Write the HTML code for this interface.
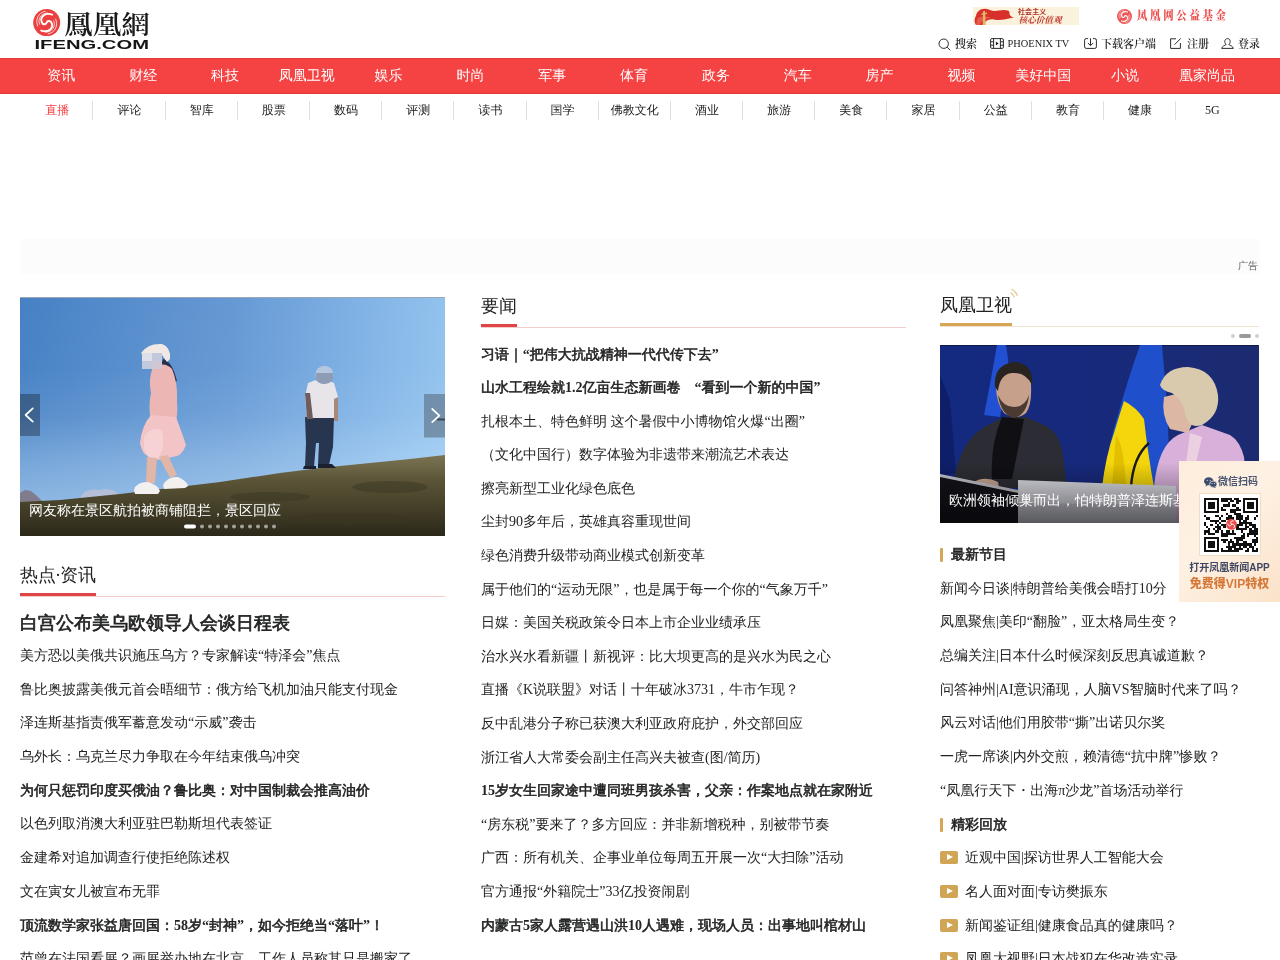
<!DOCTYPE html>
<html lang="zh-CN">
<head>
<meta charset="utf-8">
<title>凤凰网</title>
<style>
*{box-sizing:border-box}
html,body{margin:0;padding:0;background:#fff}
html{overflow:hidden;height:960px}
body{will-change:transform;width:1280px;height:960px;overflow:hidden;position:relative;font-family:"Liberation Serif","WenQuanYi Zen Hei",serif;color:#212223;font-size:14px}
a{color:inherit;text-decoration:none}
ul{list-style:none;margin:0;padding:0}
.b{-webkit-text-stroke:0.55px currentColor}
.b b{font-weight:bold;-webkit-text-stroke:0}
.h1.b{-webkit-text-stroke:0.69px currentColor}
#hd{position:absolute;left:0;top:0;width:1280px;height:58px}
#logo{position:absolute;left:30px;top:6px}
#toplinks{position:absolute;right:20px;top:34px;height:18px;font-family:"Liberation Serif","Noto Serif CJK SC",serif;font-weight:600;font-size:12px;color:#212223;display:flex;align-items:center}
#toplinks span.i{display:inline-flex;align-items:center;margin-left:14px}
#toplinks svg{margin-right:4px}
#nav{position:absolute;left:0;top:58px;width:1280px;height:36px;background:#f54343;box-shadow:inset 0 1px rgba(120,0,0,.12),inset 0 -1px rgba(120,0,0,.14)}
#nav ul{position:absolute;left:20.4px;top:0;display:flex}
#nav li{width:81.83px;text-align:center;color:#fff;font-size:14px;line-height:36px}
#sub{position:absolute;left:20.2px;top:94px;height:32px;display:flex}
#sub li{width:72.2px;padding-left:2px;text-align:center;font-size:12px;line-height:32px;position:relative;color:#212223}
#sub li:after{content:"";position:absolute;right:-1px;top:7px;width:1px;height:19px;background:#e0e0e0}
#sub li:last-child:after{display:none}
#sub li.on{color:#f54343}
#ad{position:absolute;left:20px;top:239px;width:1240px;height:35px;background:#fcfcfc}
#ad span{position:absolute;right:2px;top:21px;font-size:10px;color:#666;line-height:12px}
.col{position:absolute}
.tit{font-size:18px;line-height:24px;height:34px;border-bottom:1px solid #f3cccc;position:relative;color:#212223}
.tit i{position:absolute;left:0;bottom:0;height:3px;background:#e04545;display:block}
.list li{font-size:14px;line-height:20px;height:33.7px;white-space:nowrap;color:#212223}
.h1{font-size:18px;line-height:24px;margin-top:14px;height:36px;white-space:nowrap;color:#212223}
.tit.gold{border-bottom-color:#eee3cc}
.tit.gold i{background:#d4a656}
#dots{height:18px;position:relative}
#dots b{position:absolute;top:7px;width:4px;height:4px;border-radius:2px;background:#d0d0d0}
#dots b:nth-child(1){right:24px}
#dots b.on{right:8px;width:12px;background:#999}
#dots b:nth-child(3){right:0}
.sec{font-size:14px;line-height:20px;height:33.7px;padding-left:11px;position:relative;margin-top:0}
.sec:before{content:"";position:absolute;left:0;top:3px;width:3px;height:14px;background:#d4a656;border-radius:1px}
.play li{padding-left:25px;position:relative}
.play li:before{content:"";position:absolute;left:0;top:4px;width:17px;height:12px;background:#d4a656;border-radius:2px}
.play li:after{content:"";position:absolute;left:6px;top:7px;border-left:6px solid #fff;border-top:3px solid transparent;border-bottom:3px solid transparent}
#toplinks{right:auto;left:0;top:0;width:1280px;height:58px;display:block;font-size:11px}
#toplinks span.i{position:absolute;top:36px;height:16px;margin:0;line-height:16px;white-space:nowrap}
#toplinks span.i svg{position:absolute;left:0;top:2px;margin:0}
#toplinks em{font-style:normal;font-weight:normal;font-size:10.4px}
#toplinks span.i:nth-child(1){left:938px;padding-left:17px}
#toplinks span.i:nth-child(2){left:990px;padding-left:17.5px}
#toplinks span.i:nth-child(3){left:1084px;padding-left:17px}
#toplinks span.i:nth-child(4){left:1170px;padding-left:17px}
#toplinks span.i:nth-child(5){left:1221px;padding-left:17px}
#ban1{position:absolute;left:973px;top:7px;width:106px;height:18px;background:#faf2dc;overflow:hidden;color:#c8281f;font-family:"Liberation Sans","Noto Sans CJK SC",sans-serif}
#ban1 .t1{position:absolute;left:45px;top:1.2px;font-size:7px;line-height:8px;font-weight:bold;letter-spacing:0.1px;color:#b8352c}
#ban1 .t2{position:absolute;left:45.5px;top:8.6px;font-size:8.6px;line-height:9px;font-weight:bold;font-style:italic;color:#c03a30;font-family:"Liberation Serif","Noto Serif CJK SC",serif}
#ban2{position:absolute;left:1117px;top:7px;width:112px;height:18px;color:#ec5252}
#ban2 span{position:absolute;left:20px;top:2.2px;font-family:"Liberation Serif","Noto Serif CJK SC",serif;font-weight:900;font-size:12.4px;line-height:15px;display:inline-block;transform:scaleX(0.84);transform-origin:0 0;letter-spacing:3.2px;white-space:nowrap}
.cap{position:absolute;color:#fff;font-size:14px;line-height:20px;white-space:nowrap}
.play li:before{top:3px;width:18px;height:13px;background:#d0a555;border-radius:2px}
.play li:after{left:7px;top:6px;border-left:6px solid #fff;border-top:3.5px solid transparent;border-bottom:3.5px solid transparent}
.h1{height:35px}
#c2 .list li{height:33.6px}
#qr{position:absolute;left:1179px;top:461px;width:101px;height:141px;background:linear-gradient(135deg,#fdeddc 0%,#fef1e3 45%,#fbe2c9 100%);font-family:"Liberation Sans","Noto Sans CJK SC",sans-serif;white-space:nowrap}
#qr .q1{position:absolute;left:39px;top:14px;font-size:10px;line-height:14px;font-weight:bold;color:#4a5672}
#qr .qbox{position:absolute;left:20px;top:31.5px;width:62px;height:63px;background:#fff;border:1px solid #f1dcc6}
#qr .q2{position:absolute;left:0;width:101px;text-align:center;top:100px;font-size:10px;line-height:14px;font-weight:bold;color:#3e4762}
#qr .q3{position:absolute;left:0;width:101px;text-align:center;top:115px;font-size:12px;line-height:16px;font-weight:900;color:#d67a3c}
</style>
</head>
<body>
<div id="hd">
<div id="logo"><svg width="130" height="52" viewBox="0 0 130 52" style="display:block;overflow:visible">
<g transform="translate(3.2,3.1)"><circle cx="13.5" cy="13.5" r="13.5" fill="#ec4040"/><g fill="none" stroke="#fff" stroke-linecap="round"><path d="M19 5.5C12 3 6.5 8 8.5 13C9.5 16 13 15.5 13.5 13.5C14 11.5 17.5 11 18.5 14C20.5 19 15 24 8 21.5" stroke-width="1.9"/><path d="M12 2.2C4.5 3.5 2 11 4.5 17M14.5 3.9C7.5 4 4.3 10 6.4 15.2M15 24.8C22.5 23.5 25 16 22.5 10M12.5 23.1C19.5 23 22.7 17 20.6 11.8" stroke-width=".9" stroke-opacity=".85"/></g></g>
<text x="34" y="28.2" font-family="'Liberation Serif','Noto Serif CJK TC','Noto Serif CJK SC',serif" font-weight="600" font-size="26.3" fill="#1a1a1a" textLength="86" lengthAdjust="spacingAndGlyphs">鳳凰網</text>
<text x="4.5" y="43.1" font-family="'Liberation Sans',sans-serif" font-weight="bold" font-size="13" fill="#151515" textLength="114.5" lengthAdjust="spacingAndGlyphs">IFENG.COM</text>
</svg></div>
<div id="ban1"><svg width="44" height="18" viewBox="0 0 44 18" style="position:absolute;left:0;top:0"><path d="M3 9C4 3 10 0 17 3C23 6 29 1 36 4C37 8 36 9 41 10.5C33 12 27 14 21 12.5C15 11.5 12 15 10 18L3 18C1 15 1.5 11 3 9Z" fill="#d8302a"/><path d="M4 12C8 8 14 9 18 11C12 11 8 14 7 18L3 18Z" fill="#e85a4a"/><path d="M10.2 4L12 4L12.8 18L9.6 18Z" fill="#e0b868"/><path d="M8.5 6.5L14 5.5L14 7L8.5 8Z" fill="#e0b868"/></svg><span class="t1">社会主义</span><span class="t2">核心价值观</span></div>
<div id="ban2"><svg width="15" height="15" viewBox="0 0 27 27" style="position:absolute;left:0;top:1.5px"><circle cx="13.5" cy="13.5" r="13.5" fill="#ee5555"/><g fill="none" stroke="#fff" stroke-linecap="round"><path d="M19 5.5C12 3 6.5 8 8.5 13C9.5 16 13 15.5 13.5 13.5C14 11.5 17.5 11 18.5 14C20.5 19 15 24 8 21.5" stroke-width="1.9"/><path d="M12 2.2C4.5 3.5 2 11 4.5 17M14.5 3.9C7.5 4 4.3 10 6.4 15.2M15 24.8C22.5 23.5 25 16 22.5 10M12.5 23.1C19.5 23 22.7 17 20.6 11.8" stroke-width=".9" stroke-opacity=".85"/></g></svg><span>凤凰网公益基金</span></div>
<div id="toplinks">
<span class="i"><svg width="13" height="13" viewBox="0 0 13 13" fill="none" stroke="#2b2b2b" stroke-width="1"><circle cx="5.7" cy="5.7" r="4.7"/><path d="M9.2 9.2L12.3 12.3"/></svg>搜索</span>
<span class="i"><svg width="14" height="11" viewBox="0 0 14 11" fill="none" stroke="#2b2b2b" stroke-width="1"><rect x=".6" y=".6" width="12.8" height="9.8" rx="1.3"/><path d="M3.6 .6V10.4M10.4 .6V10.4M.6 3.8H3.6M.6 7.2H3.6M10.4 3.8H13.4M10.4 7.2H13.4"/><path d="M5.9 3.6L8.6 5.5L5.9 7.4Z" fill="#212223" stroke="none"/></svg><em>PHOENIX TV</em></span>
<span class="i"><svg width="13" height="11" viewBox="0 0 13 11" fill="none" stroke="#2b2b2b" stroke-width="1"><path d="M4 .6H2.2Q.6 .6 .6 2.2V8.8Q.6 10.4 2.2 10.4H10.8Q12.4 10.4 12.4 8.8V2.2Q12.4 .6 10.8 .6H9"/><path d="M6.5 .3V7.4M3.9 5L6.5 7.6L9.1 5"/></svg>下载客户端</span>
<span class="i"><svg width="12" height="11" viewBox="0 0 12 11" fill="none" stroke="#2b2b2b" stroke-width="1"><path d="M6 .8H.6V10.4H10.4V5"/><path d="M4.6 6.6L10.8 .4"/></svg>注册</span>
<span class="i"><svg width="13" height="11" viewBox="0 0 13 11" fill="none" stroke="#2b2b2b" stroke-width="1"><path d="M6.5 .6C8.2 .6 9.2 1.9 9.2 3.5C9.2 5 8.4 6 7.8 6.5C9.5 7.5 11.8 8.2 12.3 10.4H.7C1.2 8.2 3.5 7.5 5.2 6.5C4.6 6 3.8 5 3.8 3.5C3.8 1.9 4.8 .6 6.5 .6Z"/></svg>登录</span>
</div>
</div>
<div id="nav"><ul>
<li>资讯</li><li>财经</li><li>科技</li><li>凤凰卫视</li><li>娱乐</li><li>时尚</li><li>军事</li><li>体育</li><li>政务</li><li>汽车</li><li>房产</li><li>视频</li><li>美好中国</li><li>小说</li><li>凰家尚品</li>
</ul></div>
<ul id="sub">
<li class="on">直播</li><li>评论</li><li>智库</li><li>股票</li><li>数码</li><li>评测</li><li>读书</li><li>国学</li><li>佛教文化</li><li>酒业</li><li>旅游</li><li>美食</li><li>家居</li><li>公益</li><li>教育</li><li>健康</li><li>5G</li>
</ul>
<div id="ad"><span>广告</span></div>

<!-- LEFT -->
<div class="col" id="c1" style="left:20px;top:297px;width:425px">
<div id="slide" style="position:relative;width:425px;height:239px;overflow:hidden;background:#4f8fd8"><svg width="425" height="239" viewBox="0 0 425 239" style="position:absolute;left:0;top:0">
<defs>
<linearGradient id="sky" x1="0" y1="0" x2="1" y2="0"><stop offset="0" stop-color="#4781c4"/><stop offset=".5" stop-color="#6699d4"/><stop offset=".8" stop-color="#80b2e5"/><stop offset="1" stop-color="#92c2ed"/></linearGradient>
<linearGradient id="skyv" x1="0" y1="0" x2="0" y2="1"><stop offset="0" stop-color="#cfeaff" stop-opacity="0"/><stop offset=".3" stop-color="#cfeaff" stop-opacity=".02"/><stop offset=".5" stop-color="#cfeaff" stop-opacity=".12"/><stop offset=".68" stop-color="#cfeaff" stop-opacity=".34"/><stop offset=".85" stop-color="#cfeaff" stop-opacity=".5"/><stop offset="1" stop-color="#cfeaff" stop-opacity=".55"/></linearGradient>
<linearGradient id="hill" x1="0" y1="0" x2="0" y2="1"><stop offset="0" stop-color="#7c7554"/><stop offset=".3" stop-color="#5c5538"/><stop offset=".65" stop-color="#443f28"/><stop offset="1" stop-color="#2b281a"/></linearGradient>
</defs>
<rect width="425" height="239" fill="url(#sky)"/>
<rect width="425" height="239" fill="url(#skyv)"/>
<rect width="425" height="1" fill="#9aa6b4"/>
<path d="M0 196 L5 193 L11 194 L17 199 L24 206 L0 207Z" fill="#807c8e"/>
<path d="M61 199 Q66 191 78 193 Q90 191 97 195 L99 204 L60 206Z" fill="#b5bfd8"/>
<path d="M0 205 L40 203 L100 197 L150 191 L200 185 L260 176 L300 171 L350 166 L390 162 L425 158 L425 239 L0 239Z" fill="url(#hill)"/>
<g fill="#3a3522" fill-opacity=".5"><ellipse cx="250" cy="200" rx="40" ry="5"/><ellipse cx="370" cy="190" rx="38" ry="6"/><ellipse cx="120" cy="218" rx="50" ry="5"/><ellipse cx="330" cy="222" rx="60" ry="6"/></g>
<!-- woman -->
<path d="M143 62 Q152 64 157 84 L150 86 Q148 72 141 68Z" fill="#29304e"/>
<path d="M133 70 Q145 64 152 72 Q158 86 157 104 Q158 116 156 124 L131 124 Q128 110 131 96 Q128 82 133 70Z" fill="#ecb6b4"/>
<path d="M131 118 Q122 128 120 146 Q122 158 130 160 Q140 166 152 160 Q162 160 166 148 Q162 136 156 120Z" fill="#f2c4c6"/>
<path d="M124 140 Q132 128 142 134 Q146 150 138 162 Q128 164 124 152Z" fill="#f6d2d4"/>
<path d="M127 160 L126 186 L135 186 L137 161Z" fill="#e2b6a6"/>
<path d="M139 160 L150 181 L157 178 L148 158Z" fill="#e2b6a6"/>
<path d="M114 193 Q116 185 128 185 Q138 188 140 194 L138 197 L115 197Z" fill="#f3f1ef"/>
<path d="M143 188 Q148 179 158 180 Q167 184 168 189 L165 191 L144 192Z" fill="#f3f1ef"/>
<path d="M121 56 Q128 46 142 47 Q151 50 150 62 L147 65 L142 58 L123 58Z" fill="#efe8e4"/>
<rect x="122" y="56" width="20" height="16" fill="#c2c9dc"/>
<rect x="122" y="56" width="10" height="8" fill="#dde0ea"/>
<rect x="132" y="64" width="10" height="8" fill="#cfc8d2"/>
<!-- man -->
<path d="M285 120 L314 120 L313 150 L309 168 L298 168 L299 146 L296 146 L294 170 L285 170 L286 146Z" fill="#27354f"/>
<path d="M284 169 L296 169 L296 172 L283 172Z M298 167 L312 167 L316 171 L298 171Z" fill="#1a2030"/>
<path d="M288 86 Q301 79 314 86 L318 100 L316 121 L287 121 L285 100Z" fill="#e8e5ea"/>
<path d="M285 96 L290 96 L293 122 L287 122Z" fill="#6e5d5c"/><path d="M314 102 L318 100 L318 124 L314 124Z" fill="#a88878"/>
<circle cx="304.4" cy="77.7" r="9" fill="#b4c6e0"/>
<path d="M296 76 H313 V83 Q309 87 304 87 Q299 87 296 83Z" fill="#8e9cb6"/>
<rect x="417" y="121.5" width="8" height="2" fill="#2a3444"/>
<!-- arrows -->
<rect x="0" y="97" width="20" height="42" fill="#000" fill-opacity=".3"/>
<path d="M12.8 111.4L5.6 118L12.8 124.6" fill="none" stroke="#fff" stroke-width="1.7" stroke-linecap="round" stroke-linejoin="round"/>
<rect x="404" y="97" width="21" height="43.5" fill="#4d5b6a" fill-opacity=".5"/>
<path d="M412.2 112L419.4 118.6L412.2 125.2" fill="none" stroke="#fff" stroke-width="1.7" stroke-linecap="round" stroke-linejoin="round"/>
<!-- dots -->
<rect x="164" y="227.5" width="12" height="4" rx="2" fill="#fff"/>
<g fill="#fff" fill-opacity=".55"><circle cx="182" cy="229.5" r="2"/><circle cx="190" cy="229.5" r="2"/><circle cx="198" cy="229.5" r="2"/><circle cx="206" cy="229.5" r="2"/><circle cx="214" cy="229.5" r="2"/><circle cx="222" cy="229.5" r="2"/><circle cx="230" cy="229.5" r="2"/><circle cx="238" cy="229.5" r="2"/><circle cx="246" cy="229.5" r="2"/><circle cx="254" cy="229.5" r="2"/></g>
</svg>
<div class="cap" style="left:9px;top:204px">网友称在景区航拍被商铺阻拦，景区回应</div></div>
<div class="tit" style="margin-top:27px"><span>热点<span style="margin:0 -1px">·</span>资讯</span><i style="width:76px"></i></div>
<div class="h1 b">白宫公布美乌欧领导人会谈日程表</div>
<ul class="list">
<li>美方恐以美俄共识施压乌方？专家解读“特泽会”焦点</li>
<li>鲁比奥披露美俄元首会晤细节：俄方给飞机加油只能支付现金</li>
<li>泽连斯基指责俄军蓄意发动“示威”袭击</li>
<li>乌外长：乌克兰尽力争取在今年结束俄乌冲突</li>
<li class="b">为何只惩罚印度买俄油？鲁比奥：对中国制裁会推高油价</li>
<li>以色列取消澳大利亚驻巴勒斯坦代表签证</li>
<li>金建希对追加调查行使拒绝陈述权</li>
<li>文在寅女儿被宣布无罪</li>
<li class="b">顶流数学家张益唐回国：<b>58</b>岁<b>“</b>封神<b>”</b>，如今拒绝当<b>“</b>落叶<b>”</b>！</li>
<li>范曾在法国看展？画展举办地在北京，工作人员称其只是搬家了</li>
</ul>
</div>

<!-- MID -->
<div class="col" id="c2" style="left:481px;top:294px;width:425px">
<div class="tit"><span>要闻</span><i style="width:36px"></i></div>
<ul class="list" style="margin-top:16.5px">
<li class="b">习语｜<b>“</b>把伟大抗战精神一代代传下去<b>”</b></li>
<li class="b">山水工程绘就<b>1.2</b>亿亩生态新画卷　<b>“</b>看到一个新的中国<b>”</b></li>
<li>扎根本土、特色鲜明 这个暑假中小博物馆火爆“出圈”</li>
<li>（文化中国行）数字体验为非遗带来潮流艺术表达</li>
<li>擦亮新型工业化绿色底色</li>
<li>尘封90多年后，英雄真容重现世间</li>
<li>绿色消费升级带动商业模式创新变革</li>
<li>属于他们的“运动无限”，也是属于每一个你的“气象万千”</li>
<li>日媒：美国关税政策令日本上市企业业绩承压</li>
<li>治水兴水看新疆丨新视评：比大坝更高的是兴水为民之心</li>
<li>直播《K说联盟》对话丨十年破冰3731，牛市乍现？</li>
<li>反中乱港分子称已获澳大利亚政府庇护，外交部回应</li>
<li>浙江省人大常委会副主任高兴夫被查(图/简历)</li>
<li class="b"><b>15</b>岁女生回家途中遭同班男孩杀害，父亲：作案地点就在家附近</li>
<li>“房东税”要来了？多方回应：并非新增税种，别被带节奏</li>
<li>广西：所有机关、企事业单位每周五开展一次“大扫除”活动</li>
<li>官方通报“外籍院士”33亿投资闹剧</li>
<li class="b">内蒙古<b>5</b>家人露营遇山洪<b>10</b>人遇难，现场人员：出事地叫棺材山</li>
</ul>
</div>

<!-- RIGHT -->
<div class="col" id="c3" style="left:940px;top:293px;width:319px">
<div class="tit gold"><span>凤凰卫视</span><svg width="90" height="20" viewBox="0 -10 90 20" style="position:absolute;left:0;top:-10px;overflow:visible"><path d="M70.9 -0.2A8 8 0 0 1 74.1 4.0M71.9 -3.7A11.5 11.5 0 0 1 77.3 2.6" fill="none" stroke="#e3c896" stroke-width="1.2" stroke-linecap="round"/></svg><i style="width:72px"></i></div>
<div id="dots"><b></b><b class="on"></b><b></b></div>
<div id="tv" style="position:relative;width:319px;height:178px;overflow:hidden;background:#1b2e7a"><svg width="319" height="178" viewBox="0 0 319 178" style="position:absolute;left:0;top:0">
<defs>
<linearGradient id="tvbg" x1="0" y1="0" x2="1" y2="0"><stop offset="0" stop-color="#132a80"/><stop offset=".45" stop-color="#17297c"/><stop offset="1" stop-color="#1c2b70"/></linearGradient>
<linearGradient id="tvsh" x1="0" y1="0" x2="0" y2="1"><stop offset="0" stop-color="#000" stop-opacity="0"/><stop offset="1" stop-color="#000" stop-opacity=".55"/></linearGradient>
</defs>
<rect width="319" height="178" fill="url(#tvbg)"/>
<rect width="319" height="1" fill="#101a48"/>
<path d="M0 30 L10 55 L16 128 L0 132Z" fill="#0f1e68"/>
<path d="M57 0 L66 0 Q70 22 68 42 Q62 60 60 72 L44 70 Q50 40 57 0Z" fill="#2150d2"/>
<path d="M200 0 L222 0 Q226 40 228 80 L230 142 L163 142 Q168 100 178 70 Q186 40 200 0Z" fill="#1f4fcb"/>
<path d="M184 56 Q196 62 204 74 Q208 110 214 142 L162 142 Q166 110 174 88 Q180 68 184 56Z" fill="#f4d60c"/>
<path d="M176 90 Q184 100 186 142 L172 142Z" fill="#e2c000"/>
<path d="M191 142 Q193 112 209 98" fill="none" stroke="#1a1a22" stroke-width="2.4"/>
<!-- man -->
<path d="M14 134 Q22 92 48 80 L64 72 L86 72 L108 82 Q120 90 123 110 L127 142 L18 144Z" fill="#2c2c34"/>
<path d="M62 72 L84 74 L72 134 L52 134 Q50 100 62 72Z" fill="#0f0f14"/>
<path d="M56 40 Q56 22 74 19 Q92 20 91 40 Q92 60 86 68 Q76 76 64 68 Q56 58 56 40Z" fill="#c6a08b"/>
<path d="M55 42 Q53 20 74 17 Q94 18 92 40 Q86 27 72 28 Q60 29 58 46Z" fill="#2a2420"/>
<path d="M58 50 Q61 70 74 73 Q87 70 89 50 Q85 62 74 62 Q63 62 58 50Z" fill="#4a3a32"/>
<path d="M32 138 Q44 130 58 137 L60 148 L32 148Z" fill="#c9a691"/>
<!-- woman -->
<path d="M214 142 Q218 100 238 90 L262 80 L290 90 Q300 96 304 112 L310 178 L212 178Z" fill="#d8b0da"/>
<path d="M250 88 L262 92 L256 118 L246 118Z" fill="#ead0e0"/>
<path d="M224 52 Q221 70 230 84 L248 88 L256 70 L240 48Z" fill="#dcb8a4"/>
<path d="M220 40 Q226 22 248 22 Q274 24 278 50 Q280 70 262 80 Q250 84 246 72 Q244 56 232 48 Q222 46 220 40Z" fill="#d9caad"/>
<!-- podium -->
<path d="M0 131 L78 147 L78 178 L0 178Z" fill="#13131a"/>
<path d="M0 129 L78 145 L78 148 L0 132Z" fill="#c4c4ce"/>
<path d="M78 135 L236 141 L236 178 L78 178Z" fill="#dcdde5"/>
<path d="M78 158 L236 160 L236 178 L78 178Z" fill="#c4c5cf"/>
<rect y="118" width="319" height="60" fill="url(#tvsh)"/>
</svg>
<div class="cap" style="left:9px;top:146px">欧洲领袖倾巢而出，怕特朗普泽连斯基再吵架</div></div>
<div class="sec b" style="margin-top:22px">最新节目</div>
<ul class="list">
<li>新闻今日谈|特朗普给美俄会晤打10分</li>
<li>凤凰聚焦|美印“翻脸”，亚太格局生变？</li>
<li>总编关注|日本什么时候深刻反思真诚道歉？</li>
<li>问答神州|AI意识涌现，人脑VS智脑时代来了吗？</li>
<li>风云对话|他们用胶带“撕”出诺贝尔奖</li>
<li>一虎一席谈|内外交煎，赖清德“抗中牌”惨败？</li>
<li>“凤凰行天下・出海π沙龙”首场活动举行</li>
</ul>
<div class="sec b">精彩回放</div>
<ul class="list play">
<li>近观中国|探访世界人工智能大会</li>
<li>名人面对面|专访樊振东</li>
<li>新闻鉴证组|健康食品真的健康吗？</li>
<li>凤凰大视野|日本战犯在华改造实录</li>
</ul>
</div>
<div id="qr">
<svg width="13" height="11" viewBox="0 0 26 22" style="position:absolute;left:25px;top:16px"><ellipse cx="9.5" cy="8.5" rx="9.5" ry="8" fill="#3d4c6e"/><path d="M4 14L3 19L8 16Z" fill="#3d4c6e"/><ellipse cx="18.5" cy="14.5" rx="7.5" ry="6.3" fill="#3d4c6e" stroke="#fdebd9" stroke-width="1.4"/><path d="M22 19L23.5 22L19 20.5Z" fill="#3d4c6e"/><circle cx="6.5" cy="6.5" r="1.2" fill="#fdebd9"/><circle cx="12.5" cy="6.5" r="1.2" fill="#fdebd9"/><circle cx="16" cy="13" r="1" fill="#fdebd9"/><circle cx="21" cy="13" r="1" fill="#fdebd9"/></svg>
<span class="q1">微信扫码</span>
<div class="qbox"><svg width="54" height="54" viewBox="0 0 25 25" shape-rendering="crispEdges" style="position:absolute;left:4px;top:4px"><path d="M0 0h7v1h-7zM8 0h5v1h-5zM14 0h2v1h-2zM18 0h7v1h-7zM0 1h1v1h-1zM6 1h1v1h-1zM8 1h3v1h-3zM12 1h2v1h-2zM15 1h2v1h-2zM18 1h1v1h-1zM24 1h1v1h-1zM0 2h1v1h-1zM2 2h3v1h-3zM6 2h1v1h-1zM11 2h1v1h-1zM15 2h1v1h-1zM18 2h1v1h-1zM20 2h3v1h-3zM24 2h1v1h-1zM0 3h1v1h-1zM2 3h3v1h-3zM6 3h1v1h-1zM9 3h3v1h-3zM13 3h2v1h-2zM18 3h1v1h-1zM20 3h3v1h-3zM24 3h1v1h-1zM0 4h1v1h-1zM2 4h3v1h-3zM6 4h1v1h-1zM8 4h1v1h-1zM15 4h1v1h-1zM18 4h1v1h-1zM20 4h3v1h-3zM24 4h1v1h-1zM0 5h1v1h-1zM6 5h1v1h-1zM8 5h2v1h-2zM12 5h5v1h-5zM18 5h1v1h-1zM24 5h1v1h-1zM0 6h7v1h-7zM12 6h3v1h-3zM18 6h7v1h-7zM10 7h1v1h-1zM14 7h3v1h-3zM0 8h1v1h-1zM5 8h2v1h-2zM8 8h1v1h-1zM11 8h2v1h-2zM15 8h3v1h-3zM20 8h1v1h-1zM24 8h1v1h-1zM1 9h2v1h-2zM7 9h1v1h-1zM10 9h4v1h-4zM15 9h3v1h-3zM19 9h2v1h-2zM23 9h1v1h-1zM3 10h4v1h-4zM8 10h2v1h-2zM16 10h1v1h-1zM18 10h2v1h-2zM0 11h1v1h-1zM5 11h1v1h-1zM7 11h1v1h-1zM16 11h6v1h-6zM0 12h1v1h-1zM3 12h1v1h-1zM6 12h1v1h-1zM8 12h2v1h-2zM15 12h3v1h-3zM19 12h1v1h-1zM21 12h3v1h-3zM1 13h1v1h-1zM5 13h3v1h-3zM9 13h1v1h-1zM15 13h1v1h-1zM19 13h2v1h-2zM22 13h2v1h-2zM2 14h1v1h-1zM4 14h1v1h-1zM6 14h2v1h-2zM15 14h5v1h-5zM21 14h1v1h-1zM23 14h2v1h-2zM0 15h3v1h-3zM5 15h2v1h-2zM8 15h1v1h-1zM10 15h2v1h-2zM13 15h1v1h-1zM17 15h1v1h-1zM21 15h4v1h-4zM0 16h1v1h-1zM2 16h3v1h-3zM8 16h7v1h-7zM18 16h1v1h-1zM20 16h5v1h-5zM8 17h3v1h-3zM17 17h2v1h-2zM20 17h1v1h-1zM23 17h1v1h-1zM0 18h7v1h-7zM14 18h5v1h-5zM24 18h1v1h-1zM0 19h1v1h-1zM6 19h1v1h-1zM8 19h3v1h-3zM12 19h1v1h-1zM15 19h3v1h-3zM22 19h3v1h-3zM0 20h1v1h-1zM2 20h3v1h-3zM6 20h1v1h-1zM9 20h1v1h-1zM11 20h3v1h-3zM15 20h1v1h-1zM18 20h2v1h-2zM22 20h3v1h-3zM0 21h1v1h-1zM2 21h3v1h-3zM6 21h1v1h-1zM11 21h1v1h-1zM13 21h9v1h-9zM23 21h1v1h-1zM0 22h1v1h-1zM2 22h3v1h-3zM6 22h1v1h-1zM10 22h5v1h-5zM16 22h1v1h-1zM18 22h2v1h-2zM21 22h2v1h-2zM0 23h1v1h-1zM6 23h1v1h-1zM8 23h1v1h-1zM11 23h2v1h-2zM14 23h4v1h-4zM20 23h1v1h-1zM22 23h1v1h-1zM24 23h1v1h-1zM0 24h7v1h-7zM8 24h8v1h-8zM19 24h2v1h-2zM22 24h3v1h-3z" fill="#111"/></svg><svg width="11" height="11" viewBox="0 0 27 27" style="position:absolute;left:25.5px;top:25.5px"><circle cx="13.4" cy="13.2" r="13.3" fill="#ee4a4a"/><path d="M13.5 13C9 9 12 3.5 18 4.6M13.5 13C19 11 23 15.5 20 21M13.5 13C11.5 19 5.5 18.5 4.2 12.5" fill="none" stroke="#fff" stroke-width="2.4" stroke-linecap="round"/></svg></div>
<span class="q2">打开凤凰新闻APP</span>
<span class="q3">免费得VIP特权</span>
</div>
</body>
</html>
